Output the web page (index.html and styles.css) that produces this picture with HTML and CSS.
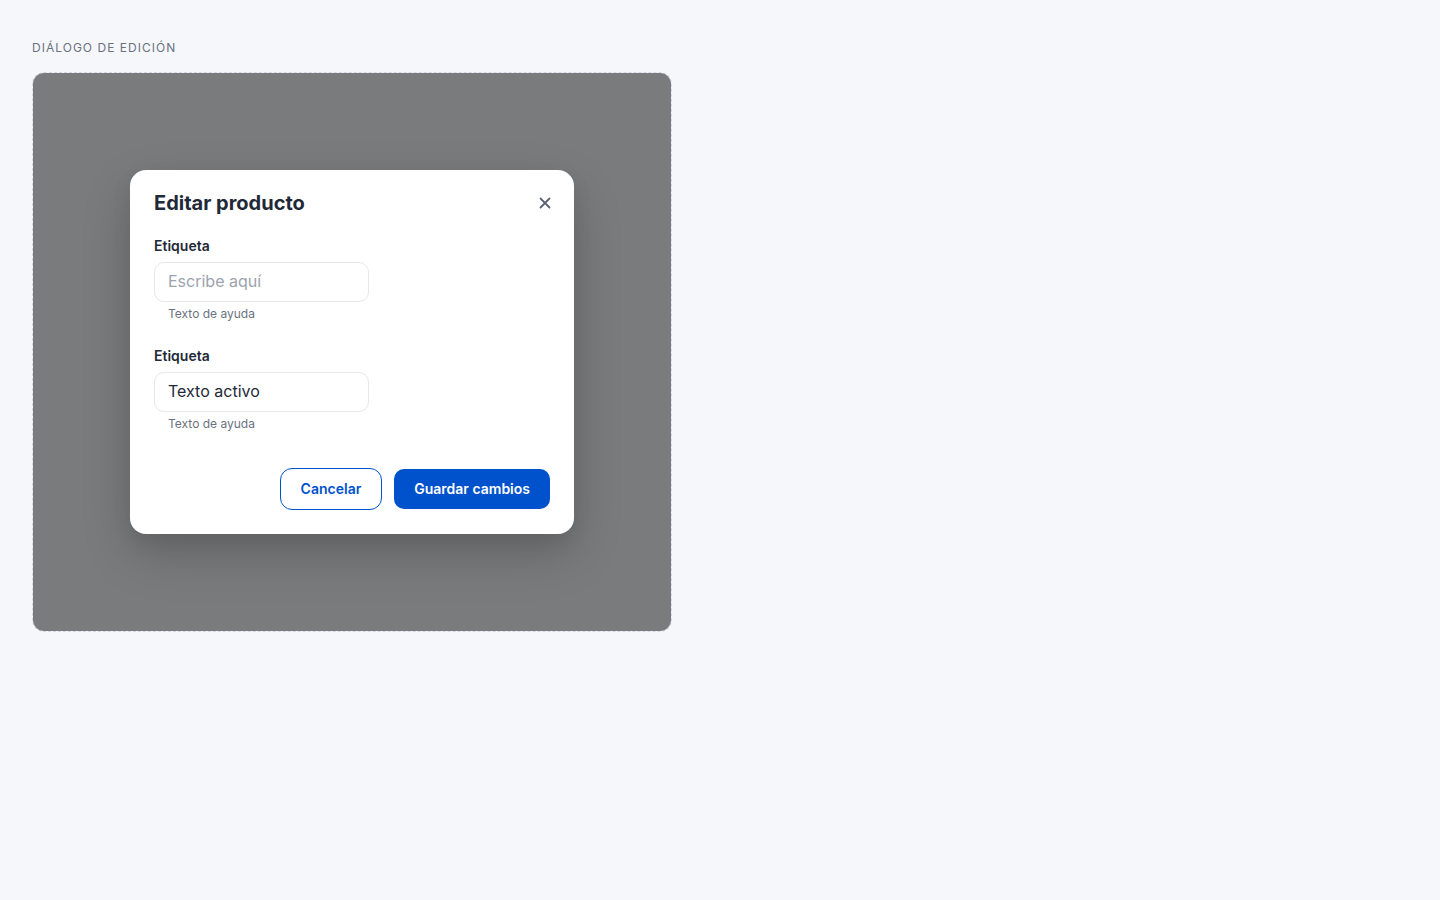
FILE: index.html
```html
<!DOCTYPE html>
<html lang="es">
<head>
<meta charset="utf-8">
<title>Diálogo de edición</title>
<link rel="stylesheet" href="styles.css">
</head>
<body>
<main class="page">
  <div class="section-label">DIÁLOGO DE EDICIÓN</div>
  <div class="frame">
    <div class="overlay">
      <div class="dialog" role="dialog" aria-labelledby="dlg-title">
        <div class="dialog-header">
          <h2 id="dlg-title" class="dialog-title">Editar producto</h2>
          <button class="close-btn" aria-label="Cerrar">
            <svg width="12" height="12" viewBox="0 0 12 12" fill="none"><path d="M1.5 1.5L10.5 10.5M10.5 1.5L1.5 10.5" stroke="currentColor" stroke-width="1.8" stroke-linecap="round"/></svg>
          </button>
        </div>
        <div class="field">
          <label class="field-label">Etiqueta</label>
          <input class="field-input" type="text" placeholder="Escribe aquí">
          <div class="field-help">Texto de ayuda</div>
        </div>
        <div class="field">
          <label class="field-label">Etiqueta</label>
          <input class="field-input" type="text" value="Texto activo">
          <div class="field-help">Texto de ayuda</div>
        </div>
        <div class="dialog-footer">
          <button class="btn btn-outline">Cancelar</button>
          <button class="btn btn-primary">Guardar cambios</button>
        </div>
      </div>
    </div>
  </div>
</main>
</body>
</html>
```

FILE: styles.css
```css
* { box-sizing: border-box; }
html, body { margin: 0; padding: 0; }
body {
  background: #f5f7fb;
  font-family: Inter, "Noto Sans", "Liberation Sans", sans-serif;
  color: #1f2937;
}
.page {
  padding: 40px 32px 32px;
}
.section-label {
  font-size: 12px;
  line-height: 16px;
  letter-spacing: 0.085em;
  color: #6b7280;
  margin-bottom: 16px;
}
.frame {
  width: 640px;
  height: 560px;
  border: 1px dashed #d4d8e0;
  border-radius: 12px;
  overflow: hidden;
}
.overlay {
  width: 100%;
  height: 100%;
  background: rgba(0, 0, 0, 0.5);
  display: flex;
  align-items: center;
  justify-content: center;
}
.dialog {
  width: 444px;
  background: #ffffff;
  border-radius: 16px;
  padding: 20px 24px 24px;
  box-shadow: 0 20px 50px rgba(0, 0, 0, 0.18), 0 8px 20px rgba(0, 0, 0, 0.08);
}
.dialog-header {
  display: flex;
  align-items: center;
  justify-content: space-between;
  height: 26px;
  margin-bottom: 20px;
}
.dialog-title {
  margin: 0;
  font-size: 20px;
  line-height: 26px;
  font-weight: 700;
  color: #1f2937;
}
.close-btn {
  border: 0;
  background: transparent;
  padding: 0;
  margin-right: -1px;
  width: 12px;
  height: 12px;
  color: #5b6372;
  display: flex;
  cursor: pointer;
}
.field {
  display: flex;
  flex-direction: column;
  align-items: flex-start;
}
.field + .field { margin-top: 24px; }
.field-label {
  font-size: 14px;
  line-height: 20px;
  font-weight: 600;
  color: #1f2937;
  margin-bottom: 6px;
}
.field-input {
  width: 215px;
  height: 40px;
  border: 1px solid #e5e7eb;
  border-radius: 10px;
  padding: 0 13px 2px;
  font-family: inherit;
  font-size: 16px;
  color: #1f2937;
  background: #fff;
  outline: none;
}
.field-input::placeholder { color: #9ca3af; }
.field-help {
  margin-top: 4px;
  padding-left: 14px;
  font-size: 12px;
  line-height: 16px;
  color: #6b7280;
}
.dialog-footer {
  display: flex;
  justify-content: flex-end;
  align-items: center;
  gap: 12px;
  margin-top: 36px;
}
.btn {
  font-family: inherit;
  font-size: 14px;
  font-weight: 600;
  border-radius: 10px;
  cursor: pointer;
}
.btn-outline {
  height: 42px;
  padding: 0 20px 2px;
  background: #fff;
  color: #0052cc;
  border: 1px solid #0052cc;
  border-radius: 12px;
}
.btn-primary {
  height: 40px;
  padding: 0 20px 2px;
  background: #0052cc;
  color: #fff;
  border: 0;
}
```
